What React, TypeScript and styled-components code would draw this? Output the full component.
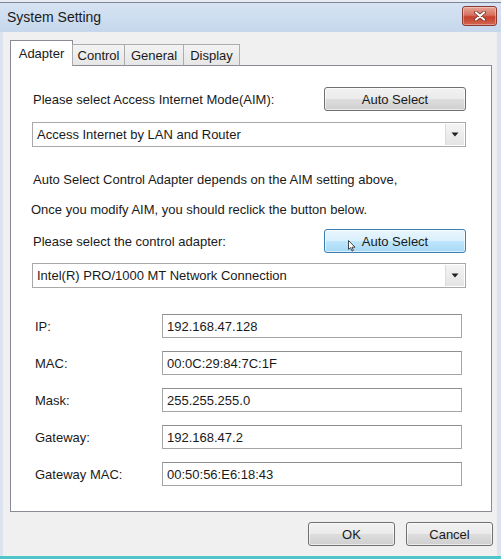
import React from 'react';
import styled, { createGlobalStyle } from 'styled-components';

const Global = createGlobalStyle`
  html, body { margin: 0; padding: 0; background: #f0f0f0; }
  body { font-family: "Liberation Sans", Arial, sans-serif; color: #1a1a1a; }
  * { box-sizing: border-box; }
`;

const Window = styled.div`
  width: 501px;
  height: 559px;
  display: flex;
  flex-direction: column;
  background: #dce3ee;
  border-top: 2px solid #e9edf3;
  border-bottom: 3px solid #4fc4c9;
  overflow: hidden;
`;

const TitleBar = styled.div`
  height: 30px;
  flex: none;
  display: flex;
  align-items: center;
  justify-content: space-between;
  padding: 0 4px 0 7px;
  border-top: 1px solid #7c8797;
  background: linear-gradient(#d6e3f3, #c6d7ec);
`;

const Title = styled.span`
  font-size: 14px;
  color: #1a1a1a;
  margin-top: -1px;
`;

const CloseButton = styled.div`
  width: 35px;
  height: 20px;
  margin-top: -3px;
  border: 1px solid #8b3a30;
  border-radius: 3px;
  display: flex;
  align-items: center;
  justify-content: center;
  background: linear-gradient(#e7a597 0%, #d7715f 45%, #c4402c 55%, #d3654f 100%);
  box-shadow: inset 0 0 0 1px rgba(255, 255, 255, 0.35);
`;

const Client = styled.div`
  flex: 1;
  margin: 0 4px 0 3px;
  background: #f0f0f0;
  display: flex;
  flex-direction: column;
  padding-top: 8px;
`;

const TabStrip = styled.div`
  display: flex;
  align-items: flex-end;
  margin-left: 7px;
  height: 26px;
  position: relative;
  z-index: 1;
  margin-bottom: -1px;
`;

const Tab = styled.div<{ $active?: boolean; $w: number }>`
  height: ${(p) => (p.$active ? 26 : 22)}px;
  width: ${(p) => p.$w}px;
  display: flex;
  align-items: center;
  justify-content: center;
  font-size: 13px;
  border: 1px solid ${(p) => (p.$active ? '#898c95' : '#acacac')};
  border-bottom: ${(p) => (p.$active ? 'none' : '1px solid #898c95')};
  margin-left: ${(p) => (p.$active ? 0 : -1)}px;
  padding-top: ${(p) => (p.$active ? 0 : 1)}px;
  background: ${(p) => (p.$active ? '#ffffff' : 'linear-gradient(#f3f3f3, #e6e6e6)')};
  &:first-child { margin-left: 0; }
`;

const Panel = styled.div`
  margin: 0 5px 0 7px;
  height: 447px;
  border: 1px solid #898c95;
  background: #ffffff;
  padding: 21px 25px 0 21px;
  display: flex;
  flex-direction: column;
`;

const Row = styled.div<{ $mt?: number }>`
  display: flex;
  align-items: center;
  justify-content: space-between;
  height: 24px;
  padding-left: 1px;
  margin-top: ${(p) => p.$mt ?? 0}px;
`;

const Label = styled.span`
  font-size: 13px;
`;

const Button = styled.div<{ $hover?: boolean; $w: number }>`
  position: relative;
  width: ${(p) => p.$w}px;
  height: 24px;
  display: flex;
  align-items: center;
  justify-content: center;
  font-size: 13px;
  border-radius: 3px;
  border: 1px solid ${(p) => (p.$hover ? '#3c7fb1' : '#707070')};
  background: ${(p) =>
    p.$hover
      ? 'linear-gradient(#eaf6fd 0%, #d9f0fc 48%, #bee6fd 52%, #a7d9f5 100%)'
      : 'linear-gradient(#f2f2f2 0%, #ebebeb 48%, #dddddd 52%, #cfcfcf 100%)'};
  box-shadow: inset 0 0 0 1px rgba(255, 255, 255, 0.6);
`;

const Cursor = styled.svg`
  position: absolute;
  left: 23px;
  top: 10px;
`;

const Combo = styled.div<{ $mt: number }>`
  margin-top: ${(p) => p.$mt}px;
  height: 25px;
  border: 1px solid #a9a9a9;
  background: #fff;
  display: flex;
  align-items: stretch;
`;

const ComboText = styled.div`
  flex: 1;
  font-size: 13px;
  display: flex;
  align-items: center;
  padding-left: 4px;
`;

const ComboArrow = styled.div`
  width: 19px;
  margin: 1px;
  border-left: 1px solid #dcdcdc;
  background: linear-gradient(#f4f4f4, #e4e4e4);
  display: flex;
  align-items: center;
  justify-content: center;
`;

const Para = styled.p<{ $ml?: number; $mt?: number }>`
  margin: 0;
  font-size: 13px;
  line-height: 30px;
  margin-left: ${(p) => p.$ml ?? 0}px;
  margin-top: ${(p) => p.$mt ?? 0}px;
`;

const Fields = styled.div`
  margin-top: 26px;
  display: grid;
  grid-template-columns: 130px 300px;
  row-gap: 13px;
`;

const FieldLabel = styled.span`
  font-size: 13px;
  padding-left: 3px;
  display: flex;
  align-items: center;
  height: 24px;
`;

const Input = styled.div`
  height: 24px;
  border: 1px solid #a5a5a5;
  border-top-color: #8e8f8f;
  background: #fff;
  font-size: 13px;
  display: flex;
  align-items: center;
  padding-left: 4px;
`;

const Footer = styled.div`
  display: flex;
  justify-content: flex-end;
  gap: 11px;
  margin-top: 10px;
  padding-right: 4px;
`;

const Arrow = () => (
  <svg width="8" height="5" viewBox="0 0 8 5">
    <path d="M0.5 0.5 H7.5 L4 4.5 Z" fill="#222" />
  </svg>
);

const fields: [string, string][] = [
  ['IP:', '192.168.47.128'],
  ['MAC:', '00:0C:29:84:7C:1F'],
  ['Mask:', '255.255.255.0'],
  ['Gateway:', '192.168.47.2'],
  ['Gateway MAC:', '00:50:56:E6:18:43'],
];

const tabs: [string, number][] = [
  ['Adapter', 63],
  ['Control', 53],
  ['General', 60],
  ['Display', 57],
];

export default function App() {
  return (
    <>
      <Global />
      <Window>
        <TitleBar>
          <Title>System Setting</Title>
          <CloseButton>
            <svg width="12" height="10" viewBox="0 0 12 10">
              <path d="M2 1.5 L10 8.5 M10 1.5 L2 8.5" stroke="#6b2a22" strokeWidth="3.6" strokeLinecap="round" />
              <path d="M2 1.5 L10 8.5 M10 1.5 L2 8.5" stroke="#ffffff" strokeWidth="2.2" strokeLinecap="round" />
            </svg>
          </CloseButton>
        </TitleBar>
        <Client>
          <TabStrip>
            {tabs.map(([t, w], i) => (
              <Tab key={t} $active={i === 0} $w={w}>
                {t}
              </Tab>
            ))}
          </TabStrip>
          <Panel>
            <Row>
              <Label>Please select Access Internet Mode(AIM):</Label>
              <Button $w={142}>Auto Select</Button>
            </Row>
            <Combo $mt={11}>
              <ComboText>Access Internet by LAN and Router</ComboText>
              <ComboArrow>
                <Arrow />
              </ComboArrow>
            </Combo>
            <Para $ml={1} $mt={18}>
              Auto Select Control Adapter depends on the AIM setting above,
            </Para>
            <Para $ml={-1}>Once you modify AIM, you should reclick the button below.</Para>
            <Row $mt={4}>
              <Label>Please select the control adapter:</Label>
              <Button $w={142} $hover>
                Auto Select
                <Cursor width="8" height="12" viewBox="0 0 8 12">
                  <path d="M0.5 0.5 L0.5 9.5 L2.6 7.6 L4 11 L5.4 10.4 L4 7.2 L7 7.2 Z" fill="#fff" stroke="#333" strokeWidth="0.9" strokeLinejoin="round" />
                </Cursor>
              </Button>
            </Row>
            <Combo $mt={10}>
              <ComboText>Intel(R) PRO/1000 MT Network Connection</ComboText>
              <ComboArrow>
                <Arrow />
              </ComboArrow>
            </Combo>
            <Fields>
              {fields.map(([l, v]) => (
                <React.Fragment key={l}>
                  <FieldLabel>{l}</FieldLabel>
                  <Input>{v}</Input>
                </React.Fragment>
              ))}
            </Fields>
          </Panel>
          <Footer>
            <Button $w={87}>OK</Button>
            <Button $w={87}>Cancel</Button>
          </Footer>
        </Client>
      </Window>
    </>
  );
}
